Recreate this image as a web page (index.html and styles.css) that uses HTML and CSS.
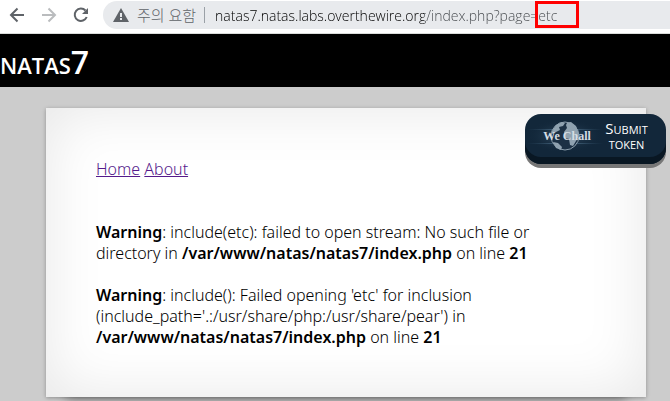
FILE: index.html
```html
<!DOCTYPE html>
<html lang="en">

<head>
  <meta charset="UTF-8">
  <meta name="viewport" content="width=device-width, initial-scale=1.0">
  <link rel="stylesheet" href="styles.css">
  <title>natas7</title>
</head>

<body>
  <!-- Browser toolbar -->
  <div class="toolbar">
    <button type="button" class="nav-button" aria-label="Back">
      <svg width="16" height="16" viewBox="0 0 16 16" fill="none" stroke="#5f6368" stroke-width="2"><path d="M15 8H2M8.500 1.500L2 8l6.500 6.500"/></svg>
    </button>
    <button type="button" class="nav-button" aria-label="Forward">
      <svg width="16" height="16" viewBox="0 0 16 16" fill="none" stroke="#babcbe" stroke-width="2"><path d="M1 8h13M7.500 1.500L14 8l-6.500 6.500"/></svg>
    </button>
    <button type="button" class="nav-button" aria-label="Reload">
      <svg width="16" height="16" viewBox="0 0 16 16"><path d="M12.500 3.500A6.200 6.200 0 1 0 13.700 10" fill="none" stroke="#5f6368" stroke-width="2"/><path d="M15 1v6H9z" fill="#5f6368"/></svg>
    </button>
    <div class="address-bar">
      <svg width="16" height="14" viewBox="0 0 16 14"><path d="M8 0l8 14H0z" fill="#5f6368"/><path d="M7 5h2v4H7zM7 10h2v2H7z" fill="#e8eaed"/></svg>
      <label class="security" for="url" lang="ko">주의 요함</label>
      <div class="url-field">
        <input type="text" class="url" id="url" value="natas7.natas.labs.overthewire.org/index.php?page=etc" spellcheck="false">
        <span class="highlight"></span>
      </div>
    </div>
  </div>

  <div class="page">
    <h1>natas7</h1>

    <div class="content">
      <a href="#home">Home</a>
      <a href="#about">About</a>
      <br>
      <br>
      <br>
      <b>Warning</b>: include(etc): failed to open stream: No such file or directory in <b>/var/www/natas/natas7/index.php</b> on line <b>21</b><br>
      <br>
      <b>Warning</b>: include(): Failed opening 'etc' for inclusion (include_path='.:/usr/share/php:/usr/share/pear') in <b>/var/www/natas/natas7/index.php</b> on line <b>21</b><br>
    </div>

    <button type="button" class="wechall">
      <svg width="76" height="36" viewBox="0 0 76 36">
        <defs>
          <linearGradient id="beam">
            <stop offset="0" stop-color="#4a7595" stop-opacity="0"/>
            <stop offset=".5" stop-color="#7ba0bb"/>
            <stop offset="1" stop-color="#4a7595" stop-opacity="0"/>
          </linearGradient>
          <radialGradient id="glow">
            <stop offset="0" stop-color="#3c5870"/>
            <stop offset="1" stop-color="#12273a" stop-opacity="0"/>
          </radialGradient>
        </defs>
        <ellipse cx="38" cy="18" rx="38" ry="17" fill="url(#glow)"/>
        <path d="M0 11h76v1H0zM0 25h76v1H0z" fill="url(#beam)" opacity=".6"/>
        <circle cx="38" cy="18" r="14" fill="#1c3145" stroke="#8da0ae"/>
        <path d="M25 13l4-6 6-3 3 1-2 3-4 1 1 3-4 2-4 2zM26 24l5 1 4 4-1 3-5-2zM40 5l4-1 5 4 2 5 1 5-3 5-3 5-3-1-1-6-4-1-1-6 3-4-1-3z" fill="#8fa2b0"/>
        <text class="logo-text" x="40" y="22" text-anchor="middle">We Chall</text>
      </svg>
      <span class="wechall-label">Submit token</span>
    </button>
  </div>
</body>

</html>
```
FILE: styles.css
```css
body {
  font-family: "Noto Sans", "Noto Sans CJK KR", sans-serif;
  font-size: 16px;
  line-height: 21px;
  background-color: #cccccc;
  color: #000;
  margin: 0;
}

.toolbar {
  display: flex;
  align-items: center;
  height: 30px;
  padding-bottom: 3px;
  padding-left: 9px;
  background-color: #fff;
  border-bottom: 1px solid #dadcda;
}

.nav-button {
  display: flex;
  padding: 0;
  margin-right: 16px;
  border: none;
  background: none;
}

.address-bar {
  flex: 1;
  display: flex;
  align-items: center;
  height: 28px;
  margin-left: -2px;
  padding-left: 10px;
  background-color: #e8eaed;
  border-radius: 14px 0 0 14px;
}

.security {
  margin-left: 8px;
  padding-right: 8px;
  border-right: 1px solid #9aa0a6;
  font-family: "Open Sans", "Noto Sans CJK KR", sans-serif;
  font-size: 15px;
  line-height: 16px;
  font-weight: 300;
  color: #5f6368;
  white-space: nowrap;
}

.url-field {
  flex: 1;
  position: relative;
  margin-left: 10px;
}

/* host is darker than the path */
.url {
  display: block;
  width: 100%;
  box-sizing: border-box;
  padding: 0;
  border: none;
  outline: none;
  font-family: "Open Sans", sans-serif;
  font-size: 14px;
  font-weight: 300;
  line-height: 21px;
  color: transparent;
  background: linear-gradient(to right, #000 209px, #45494d 209px);
  background-clip: text;
  -webkit-background-clip: text;
}

.highlight {
  position: absolute;
  top: -4px;
  left: 320px;
  width: 38px;
  height: 21px;
  border: 3px solid #ff0000;
}

.page {
  position: relative;
  isolation: isolate;
  padding-bottom: 4px;
  overflow: hidden;
}

h1 {
  margin: 0;
  padding: 7px 0 5px;
  background-color: #000;
  color: #fff;
  font-family: "Open Sans", sans-serif;
  font-size: 32px;
  font-weight: 600;
  line-height: 41px;
  font-variant: small-caps;
}

.content {
  position: relative;
  margin: 21px 24px 0 46px;
  padding: 51px 50px 49px;
  background-color: #fff;
  font-weight: 300;
  box-shadow: 0 1px 4px rgba(0, 0, 0, 0.3), 0 0 60px rgba(0, 0, 0, 0.1) inset;
}

/* lifted shadow under the bottom edge */
.content::after {
  content: "";
  position: absolute;
  z-index: -1;
  left: 20px;
  right: 20px;
  bottom: 0;
  height: 20px;
  box-shadow: 0 2px 12px rgba(0, 0, 0, 0.4);
}

.content b {
  font-weight: 600;
}

.content a {
  color: #551a8b;
}

.wechall {
  position: absolute;
  top: 80px;
  right: 4px;
  display: flex;
  align-items: center;
  width: 141px;
  height: 50px;
  padding: 0 16px 6px 2px;
  border: none;
  border-radius: 16px;
  background-color: #12273a;
  box-shadow: 0 -7px 0 #091723 inset, 0 4px 0 #777;
  color: #fff;
}

.wechall-label {
  flex: 1;
  font-family: "Open Sans", sans-serif;
  font-size: 15px;
  line-height: 15px;
  font-variant: small-caps;
}

.logo-text {
  font-family: "Liberation Serif", serif;
  font-size: 12px;
  font-weight: bold;
  fill: #d5dde3;
}
```
